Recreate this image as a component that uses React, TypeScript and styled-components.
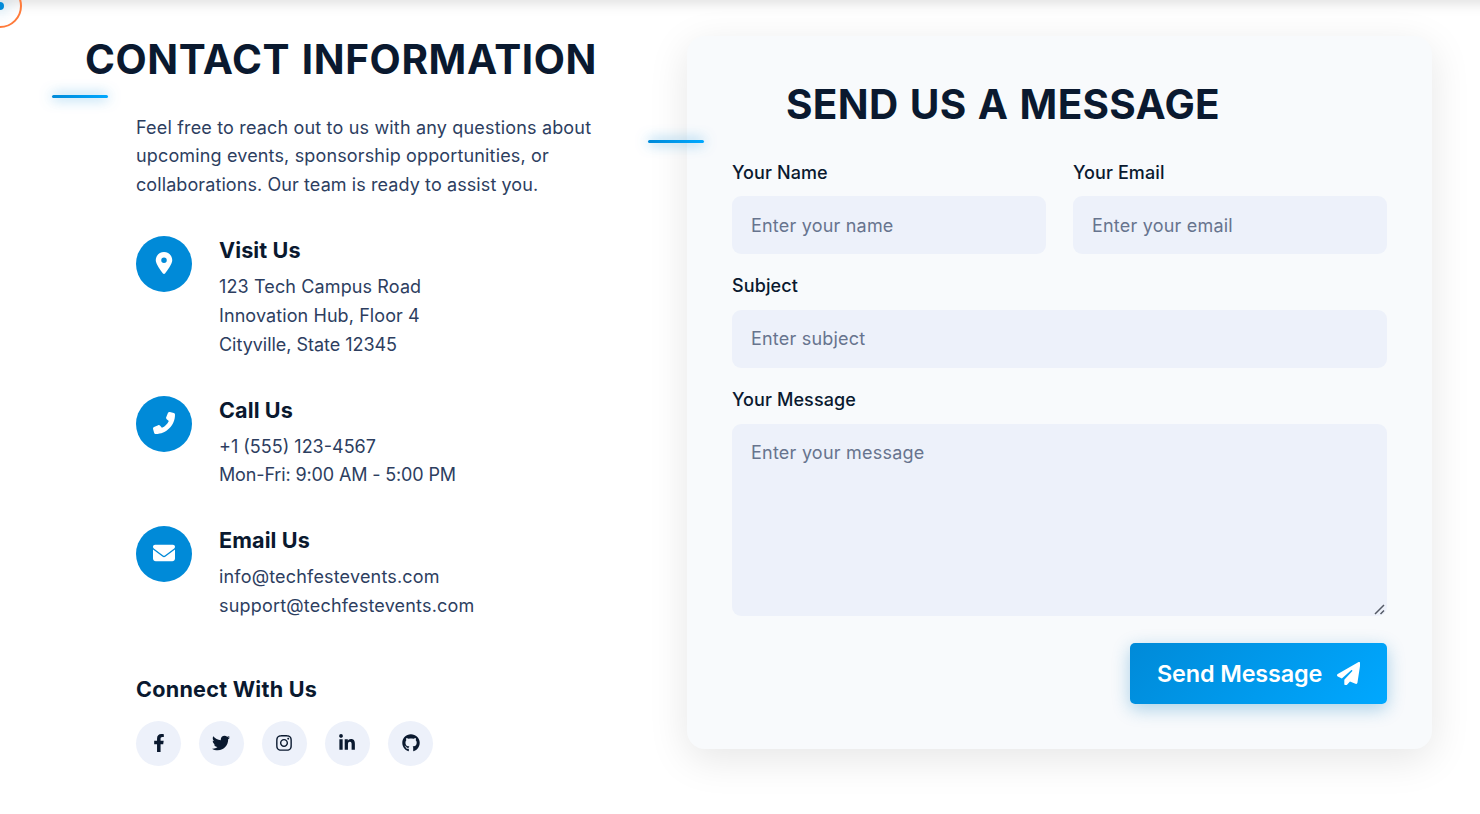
import React from "react";
import styled, { createGlobalStyle } from "styled-components";
import { FaFacebookF } from "react-icons/fa";
import {
  FaLocationDot,
  FaPhoneFlip,
  FaEnvelope,
  FaTwitter,
  FaInstagram,
  FaLinkedinIn,
  FaGithub,
  FaPaperPlane,
} from "react-icons/fa6";

const navy = "#0a192f";
const slate = "#2d3e5f";
const field = "#edf1fa";

const GlobalStyle = createGlobalStyle`
  * { box-sizing: border-box; margin: 0; padding: 0; }
  html { font-size: 18px; }
  body {
    font-family: Inter, "Liberation Sans", sans-serif;
    line-height: 1.6;
    color: ${slate};
    background: #fff;
    overflow: hidden;
  }
`;

const Page = styled.main`
  position: relative;
  height: 814px;
  padding: 36px 48px 0;
  overflow: hidden;
`;

const HeaderShadow = styled.div`
  position: absolute;
  top: -20px;
  left: -20px;
  right: -20px;
  height: 20px;
  box-shadow: 0 2px 15px rgba(0, 0, 0, 0.15);
`;

const CursorRing = styled.div`
  position: absolute;
  top: -16px;
  left: -22px;
  width: 44px;
  height: 44px;
  border: 2px solid #ff7b3a;
  border-radius: 50%;
`;

const CursorDot = styled.div`
  position: absolute;
  top: 2px;
  left: -4px;
  width: 8px;
  height: 8px;
  border-radius: 50%;
  background: #008ad8;
  box-shadow: 0 0 15px rgba(0, 138, 216, 0.6);
`;

const Columns = styled.div`
  display: grid;
  grid-template-columns: 594px 745px;
  column-gap: 45px;
  align-items: start;
`;

const Title = styled.h2<{ $barLeft: number }>`
  position: relative;
  font-size: 40.5px;
  font-weight: 700;
  line-height: 48.6px;
  letter-spacing: 0.6px;
  word-spacing: 1.4px;
  text-transform: uppercase;
  white-space: nowrap;
  color: ${navy};

  &::after {
    content: "";
    position: absolute;
    left: ${(p) => p.$barLeft}px;
    bottom: -13px;
    width: 56px;
    height: 3px;
    border-radius: 2px;
    background: linear-gradient(90deg, #008ad8, #00a8ff);
    box-shadow: 0 0 13px rgba(0, 138, 216, 0.75);
  }
`;

const Info = styled.section`
  padding: 0 0 0 88px;
`;

const InfoTitle = styled(Title)`
  margin-left: -51px;
`;

const Intro = styled.p`
  margin-top: 29px;
  width: 490px;
`;

const Line = styled.span<{ $tracking: number }>`
  display: block;
  white-space: nowrap;
  letter-spacing: ${(p) => p.$tracking}px;
`;

const Contact = styled.div`
  display: flex;
  gap: 27px;
  align-items: flex-start;
`;

const ContactList = styled.div`
  display: flex;
  flex-direction: column;
  gap: 36.2px;
  margin-top: 36px;
`;

const Badge = styled.div`
  display: flex;
  align-items: center;
  justify-content: center;
  flex: none;
  width: 56px;
  height: 56px;
  padding-bottom: 2px;
  border-radius: 50%;
  background: #008ad8;
  color: #fff;
  font-size: 22px;
`;

const SmallTitle = styled.h3<{ $tracking?: number }>`
  font-size: 21.6px;
  font-weight: 700;
  line-height: 28px;
  letter-spacing: ${(p) => p.$tracking ?? 0.1}px;
  color: ${navy};
`;

const Details = styled.p`
  margin-top: 9px;
`;

const Social = styled.div`
  margin-top: 54px;
`;

const SocialRow = styled.div`
  display: flex;
  gap: 18px;
  margin-top: 18px;
`;

const SocialLink = styled.a<{ $inset: number }>`
  display: flex;
  align-items: center;
  justify-content: center;
  width: 45px;
  height: 45px;
  padding: 0 ${(p) => p.$inset}px 1px 0;
  border-radius: 50%;
  background: ${field};
  color: ${navy};
  font-size: 18px;
`;

const Card = styled.section`
  height: 713px;
  padding: 45px;
  border-radius: 18px;
  background: #f8fafc;
  box-shadow: 0 10px 40px rgba(0, 0, 0, 0.1);
`;

const CardTitle = styled(Title)`
  margin-left: 54px;
  letter-spacing: 0.3px;
`;

const Form = styled.form`
  display: grid;
  grid-template-columns: 1fr 1fr;
  column-gap: 27px;
  row-gap: 18px;
  margin-top: 29px;
`;

const Field = styled.label<{ $wide?: boolean }>`
  position: relative;
  display: flex;
  flex-direction: column;
  gap: 9px;
  grid-column: ${(p) => (p.$wide ? "1 / -1" : "auto")};
  font-weight: 500;
  letter-spacing: 0.1px;
  color: ${navy};
`;

const Input = styled.input<{ $lift?: number }>`
  width: 100%;
  height: 58px;
  padding: 0 19px ${(p) => p.$lift ?? 0}px;
  border: 0;
  border-radius: 9px;
  background: ${field};
  font: 400 18px Inter, "Liberation Sans", sans-serif;
  letter-spacing: 0.2px;

  &::placeholder {
    color: #67748e;
  }
`;

const TextArea = styled.textarea`
  width: 100%;
  height: 192px;
  padding: 15px 19px;
  border: 0;
  border-radius: 9px;
  background: ${field};
  font: 400 18px/28.8px Inter, "Liberation Sans", sans-serif;
  letter-spacing: 0.23px;
  resize: none;

  &::placeholder {
    color: #67748e;
  }
`;

const ResizeGrip = styled.svg`
  position: absolute;
  right: 2px;
  bottom: 1px;
  width: 11px;
  height: 11px;
`;

const SendButton = styled.button`
  display: flex;
  align-items: center;
  justify-content: space-between;
  grid-column: 1 / -1;
  justify-self: end;
  width: 257px;
  height: 61px;
  margin-top: 9px;
  padding: 0 27px;
  border: 0;
  border-radius: 5px;
  background: linear-gradient(135deg, #008ad8, #00a8ff);
  box-shadow: 0 5px 18px rgba(0, 120, 190, 0.32);
  color: #fff;
  font: 600 23.4px Inter, "Liberation Sans", sans-serif;
  letter-spacing: -0.13px;
`;

type TextLine = [text: string, tracking: number];

const intro: TextLine[] = [
  ["Feel free to reach out to us with any questions about", 0.17],
  ["upcoming events, sponsorship opportunities, or", 0.15],
  ["collaborations. Our team is ready to assist you.", 0.09],
];

const contacts: { icon: React.ReactNode; title: string; lines: TextLine[] }[] = [
  {
    icon: <FaLocationDot />,
    title: "Visit Us",
    lines: [
      ["123 Tech Campus Road", 0.12],
      ["Innovation Hub, Floor 4", 0.09],
      ["Cityville, State 12345", -0.03],
    ],
  },
  {
    icon: <FaPhoneFlip />,
    title: "Call Us",
    lines: [
      ["+1 (555) 123-4567", 0],
      ["Mon-Fri: 9:00 AM - 5:00 PM", -0.14],
    ],
  },
  {
    icon: <FaEnvelope />,
    title: "Email Us",
    lines: [
      ["info@techfestevents.com", 0.18],
      ["support@techfestevents.com", 0.19],
    ],
  },
];

const socials = [
  { Icon: FaFacebookF, inset: 0 },
  { Icon: FaTwitter, inset: 1 },
  { Icon: FaInstagram, inset: 1 },
  { Icon: FaLinkedinIn, inset: 1 },
  { Icon: FaGithub, inset: 0 },
];

function Lines({ lines }: { lines: TextLine[] }) {
  return (
    <>
      {lines.map(([text, tracking]) => (
        <Line key={text} $tracking={tracking}>
          {text}
        </Line>
      ))}
    </>
  );
}

export default function App() {
  return (
    <Page>
      <GlobalStyle />
      <HeaderShadow />
      <Columns>
        <Info>
          <InfoTitle $barLeft={-33}>Contact Information</InfoTitle>
          <Intro>
            <Lines lines={intro} />
          </Intro>
          <ContactList>
            {contacts.map((c) => (
              <Contact key={c.title}>
                <Badge>{c.icon}</Badge>
                <div>
                  <SmallTitle>{c.title}</SmallTitle>
                  <Details>
                    <Lines lines={c.lines} />
                  </Details>
                </div>
              </Contact>
            ))}
          </ContactList>
          <Social>
            <SmallTitle $tracking={0.25}>Connect With Us</SmallTitle>
            <SocialRow>
              {socials.map(({ Icon, inset }, i) => (
                <SocialLink key={i} $inset={inset}>
                  <Icon />
                </SocialLink>
              ))}
            </SocialRow>
          </Social>
        </Info>
        <Card>
          <CardTitle $barLeft={-138}>Send Us a Message</CardTitle>
          <Form>
            <Field>
              Your Name
              <Input placeholder="Enter your name" />
            </Field>
            <Field>
              Your Email
              <Input placeholder="Enter your email" />
            </Field>
            <Field $wide>
              Subject
              <Input $lift={1.5} placeholder="Enter subject" />
            </Field>
            <Field $wide>
              Your Message
              <TextArea placeholder="Enter your message" />
              <ResizeGrip viewBox="0 0 11 11" stroke="#555a66" strokeWidth="1.5">
                <path d="M1 10L10 1M6.5 10L10 6.5" />
              </ResizeGrip>
            </Field>
            <SendButton type="button">
              Send Message
              <FaPaperPlane />
            </SendButton>
          </Form>
        </Card>
      </Columns>
      <CursorRing />
      <CursorDot />
    </Page>
  );
}
